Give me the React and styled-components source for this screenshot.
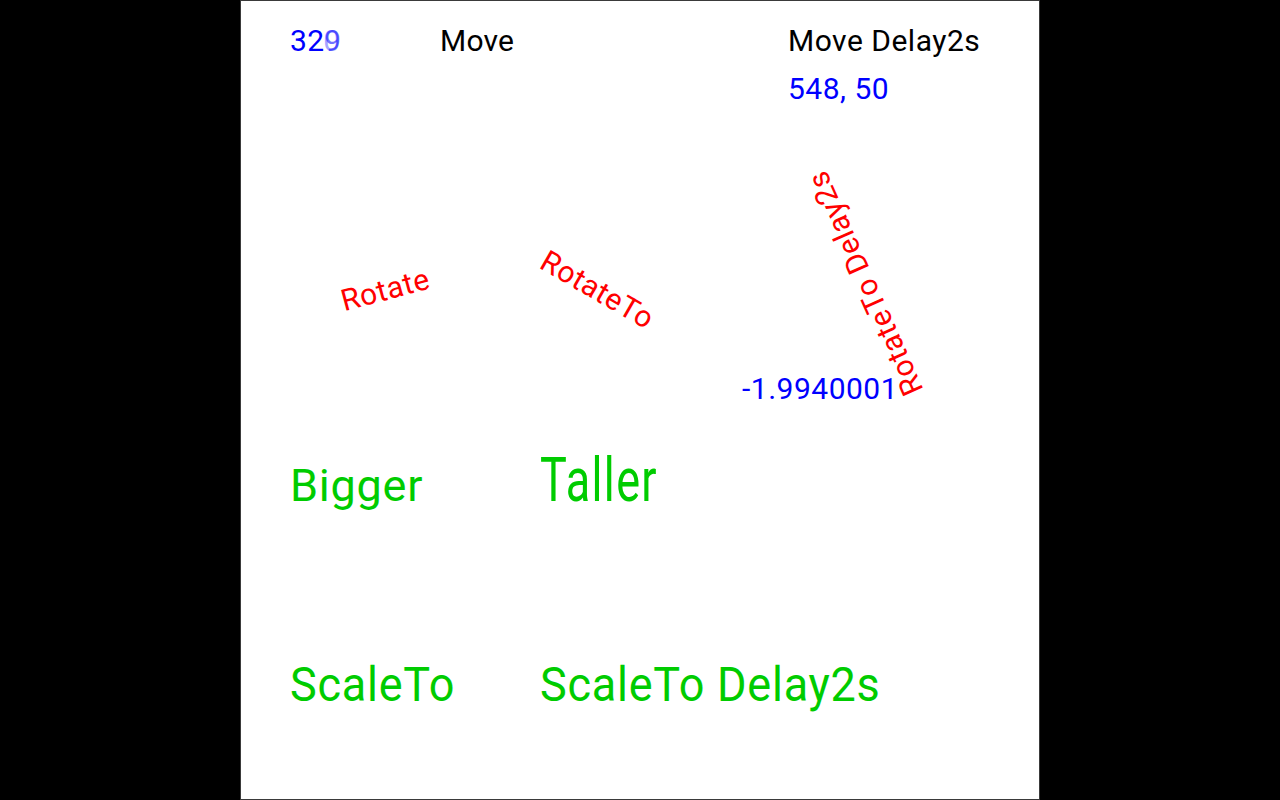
import React from "react";
import styled, { createGlobalStyle } from "styled-components";

const Global = createGlobalStyle`
  html, body { margin: 0; padding: 0; background: #000; }
  body { font-family: Roboto, "Noto Sans", sans-serif; }
  #root { width: 1280px; height: 800px; }
`;

const Screen = styled.div`
  width: 1280px;
  height: 800px;
  background: #000;
  display: flex;
  justify-content: center;
`;

const Stage = styled.div`
  box-sizing: border-box;
  width: 800px;
  height: 800px;
  background: #fff;
  border: 1px solid #3a3a3a;
  display: flex;
  flex-direction: column;
  overflow: hidden;
`;

const Row = styled.div`
  height: 200px;
  flex: none;
  display: flex;
  align-items: flex-start;
  box-sizing: border-box;
  padding-left: ${(p) => p.$left ?? 49}px;
  padding-top: ${(p) => p.$top ?? 0}px;
`;

const Slot = styled.div`
  flex: none;
  width: ${(p) => (p.$w ? `${p.$w}px` : "auto")};
  ${(p) => (p.$h ? `height: ${p.$h}px;` : "")}
  ${(p) =>
    p.$center
      ? "display: flex; align-items: center; justify-content: center;"
      : ""}
`;

const Label = styled.div`
  font-family: Roboto, "Noto Sans", sans-serif;
  font-size: 30px;
  line-height: 35px;
  letter-spacing: ${(p) => p.$ls ?? 0.5}px;
  white-space: nowrap;
  color: ${(p) => p.$color || "#000"};
  margin-top: ${(p) => p.$mt || 0}px;
  margin-left: ${(p) => p.$ml || 0}px;
`;

const Scaled = styled(Label)`
  transform-origin: 0 27.7px;
  transform: scale(${(p) => p.$sx}, ${(p) => p.$sy});
`;

const Rotated = styled(Label)`
  transform: rotate(${(p) => p.$deg}deg);
  transform-origin: 50% 50%;
`;

const Ghost = styled.span`
  display: inline-grid;
  & > span {
    grid-area: 1 / 1;
  }
`;

const GhostDigit = styled.span`
  opacity: ${(p) => p.$o};
  transform: translateX(${(p) => p.$dx || 0}px);
`;

const Stack = styled.div`
  display: grid;
  width: 320px;
  height: 200px;
  & > * {
    grid-area: 1 / 1;
    justify-self: start;
    align-self: start;
  }
`;

const GREEN = "#00cc00";
const RED = "#ff0000";
const BLUE = "#0000ff";

export default function App() {
  return (
    <>
      <Global />
      <Screen>
        <Stage>
          <Row $top={22}>
            <Slot $w={150}>
              <Label $color={BLUE} $ls={0.3}>
                32
                <Ghost>
                  <GhostDigit $o={0.55}>9</GhostDigit>
                  <GhostDigit $o={0.35} $dx={-1}>0</GhostDigit>
                </Ghost>
              </Label>
            </Slot>
            <Slot $w={348}>
              <Label $ls={0.2}>Move</Label>
            </Slot>
            <Slot>
              <Label>Move Delay2s</Label>
              <Label $color={BLUE} $mt={13}>548, 50</Label>
            </Slot>
          </Row>

          <Row>
            <Slot $w={190} $h={176} $center>
              <Rotated $color={RED} $deg={-15}>Rotate</Rotated>
            </Slot>
            <Slot $w={236} $h={176} $center>
              <Rotated $color={RED} $deg={30}>RotateTo</Rotated>
            </Slot>
            <Stack>
              <Label $color={BLUE} $mt={170} $ml={26}>-1.9940001</Label>
              <Rotated $color={RED} $deg={-114} $mt={65} $ml={28}>
                RotateTo Delay2s
              </Rotated>
            </Stack>
          </Row>

          <Row $top={72}>
            <Slot $w={250}>
              <Scaled $color={GREEN} $sx={1.5} $sy={1.5}>Bigger</Scaled>
            </Slot>
            <Slot>
              <Scaled $color={GREEN} $sx={1.5} $sy={2.05} $ls={0.9}>Taller</Scaled>
            </Slot>
          </Row>

          <Row $top={72}>
            <Slot $w={250}>
              <Scaled $color={GREEN} $sx={1.5} $sy={1.6}>ScaleTo</Scaled>
            </Slot>
            <Slot>
              <Scaled $color={GREEN} $sx={1.5} $sy={1.6}>ScaleTo Delay2s</Scaled>
            </Slot>
          </Row>
        </Stage>
      </Screen>
    </>
  );
}
